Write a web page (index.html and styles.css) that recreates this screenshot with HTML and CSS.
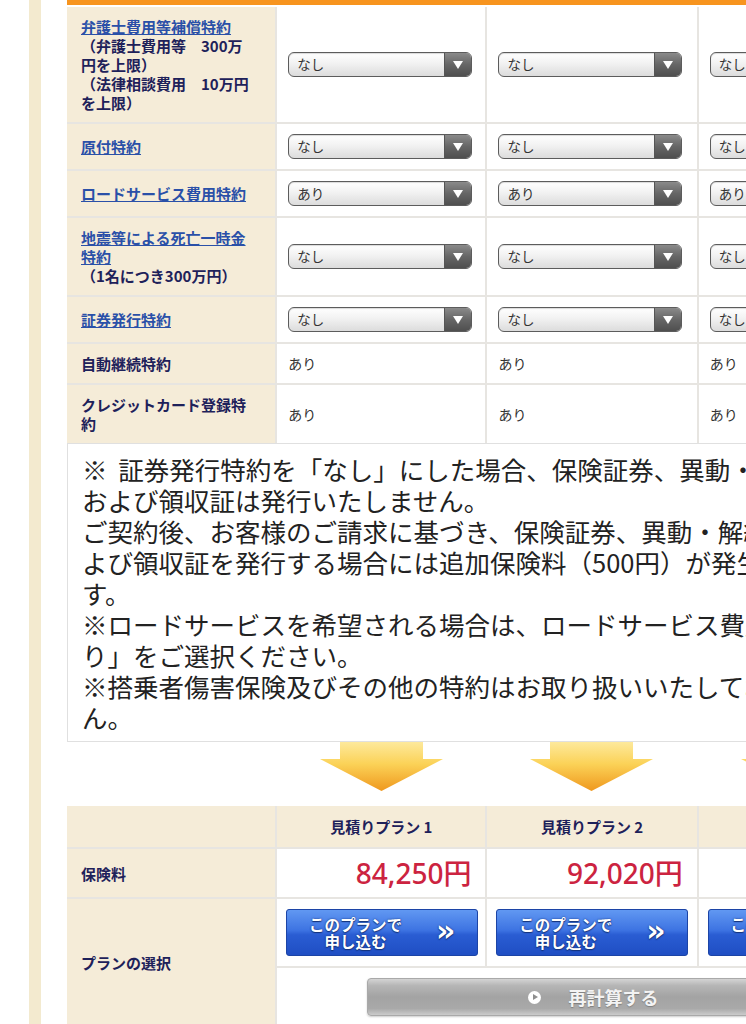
FILE: index.html
```html
<!DOCTYPE html>
<html lang="ja">
<head>
<meta charset="utf-8">
<title>お見積り</title>
<link rel="stylesheet" href="styles.css">
</head>
<body>
<div class="page">
  <div class="content">
    <div class="topbar"></div>
    <table class="opts">
      <colgroup><col class="c-label"><col class="c-plan1"><col class="c-plan"><col class="c-plan"></colgroup>
      <tr>
        <th><a href="#">弁護士費用等補償特約</a><br>（弁護士費用等　300万<br>円を上限）<br>（法律相談費用　10万円<br>を上限）</th>
        <td><span class="sel"><span class="sel-val">なし</span><span class="sel-btn"></span></span></td>
        <td><span class="sel"><span class="sel-val">なし</span><span class="sel-btn"></span></span></td>
        <td><span class="sel"><span class="sel-val">なし</span><span class="sel-btn"></span></span></td>
      </tr>
      <tr>
        <th><a href="#">原付特約</a></th>
        <td><span class="sel"><span class="sel-val">なし</span><span class="sel-btn"></span></span></td>
        <td><span class="sel"><span class="sel-val">なし</span><span class="sel-btn"></span></span></td>
        <td><span class="sel"><span class="sel-val">なし</span><span class="sel-btn"></span></span></td>
      </tr>
      <tr>
        <th><a href="#">ロードサービス費用特約</a></th>
        <td><span class="sel"><span class="sel-val">あり</span><span class="sel-btn"></span></span></td>
        <td><span class="sel"><span class="sel-val">あり</span><span class="sel-btn"></span></span></td>
        <td><span class="sel"><span class="sel-val">あり</span><span class="sel-btn"></span></span></td>
      </tr>
      <tr>
        <th><a href="#">地震等による死亡一時金<br>特約</a><br>（1名につき300万円）</th>
        <td><span class="sel"><span class="sel-val">なし</span><span class="sel-btn"></span></span></td>
        <td><span class="sel"><span class="sel-val">なし</span><span class="sel-btn"></span></span></td>
        <td><span class="sel"><span class="sel-val">なし</span><span class="sel-btn"></span></span></td>
      </tr>
      <tr>
        <th><a href="#">証券発行特約</a></th>
        <td><span class="sel"><span class="sel-val">なし</span><span class="sel-btn"></span></span></td>
        <td><span class="sel"><span class="sel-val">なし</span><span class="sel-btn"></span></span></td>
        <td><span class="sel"><span class="sel-val">なし</span><span class="sel-btn"></span></span></td>
      </tr>
      <tr>
        <th>自動継続特約</th>
        <td class="txt">あり</td>
        <td class="txt">あり</td>
        <td class="txt">あり</td>
      </tr>
      <tr>
        <th>クレジットカード登録特<br>約</th>
        <td class="txt">あり</td>
        <td class="txt">あり</td>
        <td class="txt">あり</td>
      </tr>
    </table>

    <div class="notes">※ 証券発行特約を「なし」にした場合、保険証券、異動・解約証明書<br>および領収証は発行いたしません。<br>ご契約後、お客様のご請求に基づき、保険証券、異動・解約証明書お<br>よび領収証を発行する場合には追加保険料（500円）が発生しま<br>す。<br>※ロードサービスを希望される場合は、ロードサービス費用特約で「あ<br>り」をご選択ください。<br>※搭乗者傷害保険及びその他の特約はお取り扱いいたしておりませ<br>ん。</div>

    <div class="arrows">
      <div class="arrow-cell a1">
        <svg width="123" height="49" viewBox="0 0 123 49"><defs><linearGradient id="ag1" x1="0" y1="0" x2="0" y2="1"><stop offset="0" stop-color="#fde99c"/><stop offset="0.45" stop-color="#fbd257"/><stop offset="1" stop-color="#ef981e"/></linearGradient></defs><polygon points="20,0 103,0 103,17 123,17 61.5,49 0,17 20,17" fill="url(#ag1)"/></svg>
      </div>
      <div class="arrow-cell">
        <svg width="123" height="49" viewBox="0 0 123 49"><defs><linearGradient id="ag2" x1="0" y1="0" x2="0" y2="1"><stop offset="0" stop-color="#fde99c"/><stop offset="0.45" stop-color="#fbd257"/><stop offset="1" stop-color="#ef981e"/></linearGradient></defs><polygon points="20,0 103,0 103,17 123,17 61.5,49 0,17 20,17" fill="url(#ag2)"/></svg>
      </div>
      <div class="arrow-cell">
        <svg width="123" height="49" viewBox="0 0 123 49"><defs><linearGradient id="ag3" x1="0" y1="0" x2="0" y2="1"><stop offset="0" stop-color="#fde99c"/><stop offset="0.45" stop-color="#fbd257"/><stop offset="1" stop-color="#ef981e"/></linearGradient></defs><polygon points="20,0 103,0 103,17 123,17 61.5,49 0,17 20,17" fill="url(#ag3)"/></svg>
      </div>
    </div>

    <table class="result">
      <colgroup><col class="c-label"><col class="c-plan1"><col class="c-plan"><col class="c-plan"></colgroup>
      <tr class="head">
        <th></th>
        <th class="plan-h">見積りプラン 1</th>
        <th class="plan-h">見積りプラン 2</th>
        <th class="plan-h">見積りプラン 3</th>
      </tr>
      <tr>
        <th>保険料</th>
        <td class="price">84,250円</td>
        <td class="price">92,020円</td>
        <td class="price">98,740円</td>
      </tr>
      <tr>
        <th rowspan="2">プランの選択</th>
        <td class="btn-cell"><a class="apply" href="#"><span class="apply-txt">このプランで<br>申し込む</span><span class="apply-arr">»</span></a></td>
        <td class="btn-cell"><a class="apply" href="#"><span class="apply-txt">このプランで<br>申し込む</span><span class="apply-arr">»</span></a></td>
        <td class="btn-cell"><a class="apply" href="#"><span class="apply-txt">このプランで<br>申し込む</span><span class="apply-arr">»</span></a></td>
      </tr>
      <tr>
        <td class="recalc-cell" colspan="3"><a class="recalc" href="#"><span class="play"></span><span class="recalc-txt">再計算する</span></a></td>
      </tr>
    </table>
  </div>
</div>
</body>
</html>
```

FILE: styles.css
```css
html, body {
  margin: 0;
  padding: 0;
}
body {
  background: #ffffff;
  font-family: "Noto Sans CJK JP", "Noto Sans", sans-serif;
  color: #333333;
  overflow-x: hidden;
}
.page {
  margin-left: 29px;
  border-left: 12px solid #f3eacf;
  padding-left: 26px;
  min-height: 1100px;
  width: 842px;
}
.content {
  width: 842px;
}
.topbar {
  height: 5px;
  background: #f7941e;
  margin-bottom: 2px;
}

table {
  border-collapse: collapse;
  table-layout: fixed;
  width: 842px;
  border-style: hidden;
}
col.c-label { width: 209px; }
col.c-plan1 { width: 210px; }
col.c-plan { width: 211px; }

th, td {
  border: 2px solid #e7e5e1;
  vertical-align: middle;
}
th {
  background: #f5ecd8;
  color: #1e215a;
  font-weight: 700;
  font-size: 15px;
  line-height: 19px;
  text-align: left;
  padding: 10px 14px;
}
th a {
  color: #2a50a8;
  text-decoration: underline;
}
td {
  background: #ffffff;
  padding: 10px 11px;
}
td.txt {
  font-size: 14px;
  line-height: 19px;
  color: #333333;
}

/* select box */
.sel {
  display: flex;
  width: 184px;
  height: 25px;
  box-sizing: border-box;
  border: 1px solid #5c5c5c;
  border-radius: 6px;
  background: linear-gradient(#ffffff 0%, #f2f2f2 45%, #dcdcdc 100%);
  box-shadow: inset 0 1px 1px rgba(0, 0, 0, 0.15);
  overflow: hidden;
}
.sel-val {
  flex: 1;
  font-size: 13.5px;
  line-height: 23px;
  color: #333333;
  padding-left: 8px;
}
.sel-btn {
  width: 26px;
  display: flex;
  align-items: center;
  justify-content: center;
  background: linear-gradient(#8a8a8a 0%, #666666 50%, #4f4f4f 100%);
  border-left: 1px solid #555555;
}
.sel-btn::after {
  content: "";
  width: 0;
  height: 0;
  border-left: 5px solid transparent;
  border-right: 5px solid transparent;
  border-top: 8px solid #ffffff;
  margin-top: 1px;
}

/* notes */
.notes {
  border: 1px solid #e0e0e0;
  padding: 9px 14px;
  font-size: 25.5px;
  line-height: 31px;
  word-spacing: 5px;
  color: #222222;
  white-space: nowrap;
  overflow: hidden;
}

/* arrows */
.arrows {
  display: flex;
  height: 64px;
  padding-left: 209px;
}
.arrow-cell {
  width: 211px;
  display: flex;
  justify-content: center;
  align-items: flex-start;
}
.arrow-cell.a1 { width: 210px; }

/* result table */
.result .head th {
  padding-top: 11px;
  padding-bottom: 11px;
}
.result th.plan-h {
  text-align: center;
}
.result td.price {
  text-align: right;
  font-family: "Noto Sans", "Noto Sans CJK JP", sans-serif;
  font-size: 28px;
  font-weight: 500;
  line-height: 30px;
  color: #cc2340;
  padding: 9px 14px 9px 11px;
}
.result td.btn-cell {
  padding: 10px 8px 10px 9px;
}
.apply {
  display: flex;
  align-items: center;
  justify-content: center;
  gap: 34px;
  width: 192px;
  height: 47px;
  box-sizing: border-box;
  border: 1px solid #1c44a6;
  border-radius: 3px;
  background: linear-gradient(#6198f2 0%, #3d73e2 45%, #2a5dd3 55%, #1f4ec3 100%);
  color: #ffffff;
  text-decoration: none;
  text-shadow: 0 0 2px #15337a, 0 1px 1px #15337a;
  font-weight: 700;
}
.apply-txt {
  font-size: 15.5px;
  line-height: 17px;
  text-align: center;
}
.apply-arr {
  font-family: "DejaVu Sans", sans-serif;
  font-size: 30px;
  line-height: 30px;
  margin-top: -4px;
}
.result td.recalc-cell {
  padding: 10px 11px;
}
.recalc {
  display: flex;
  align-items: center;
  justify-content: center;
  gap: 28px;
  width: 452px;
  height: 38px;
  margin: 0 auto;
  box-sizing: border-box;
  border: 1px solid #a9a9a9;
  border-radius: 4px;
  background: linear-gradient(#d4d4d4 0%, #b6b6b6 18%, #a3a3a3 50%, #a9a9a9 82%, #cbcbcb 100%);
  box-shadow: 0 1px 2px rgba(0, 0, 0, 0.2);
  text-decoration: none;
}
.play {
  width: 13px;
  height: 13px;
  border-radius: 50%;
  background: #ffffff;
  display: flex;
  align-items: center;
  justify-content: center;
}
.play::after {
  content: "";
  width: 0;
  height: 0;
  border-top: 3.5px solid transparent;
  border-bottom: 3.5px solid transparent;
  border-left: 5px solid #8f8f8f;
  margin-left: 2px;
}
.recalc-txt {
  font-size: 18px;
  font-weight: 700;
  line-height: 22px;
  color: #f3f3f3;
  text-shadow: 0 1px 1px rgba(0, 0, 0, 0.25);
}
```
